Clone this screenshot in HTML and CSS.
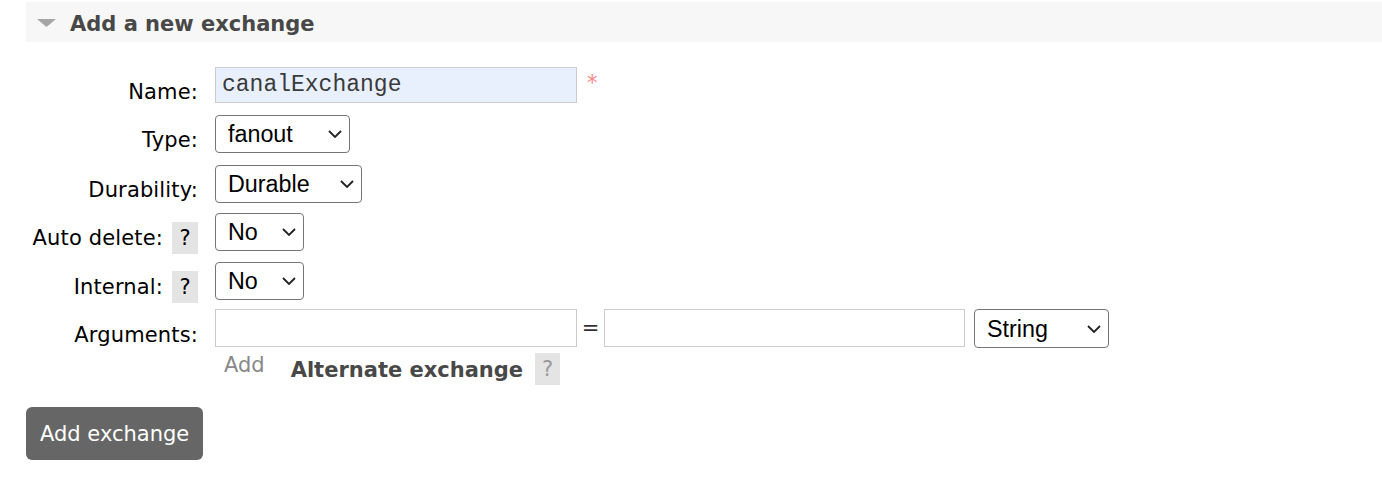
FILE: index.html
```html
<!DOCTYPE html>
<html>
<head>
<meta charset="utf-8">
<link rel="stylesheet" href="styles.css">
</head>
<body>
<div class="section">
  <div class="section-head">
    <svg class="tri" width="19" height="8" viewBox="0 0 19 8"><polygon points="0,0 19,0 9.5,8" fill="#a6a6a6"/></svg>
    <h2 class="title">Add a new exchange</h2>
  </div>
  <form class="form">
    <div class="label">Name:</div>
    <div class="cell">
      <input class="text name-input" type="text" value="canalExchange">
      <span class="req">*</span>
    </div>

    <div class="label">Type:</div>
    <div class="cell">
      <span class="sel-wrap">
        <select class="sel sel-type"><option>direct</option><option selected>fanout</option><option>headers</option><option>topic</option></select>
        <svg class="chev" width="14" height="8" viewBox="0 0 14 8"><polyline points="1,1 7,7 13,1" fill="none" stroke="#222" stroke-width="1.8"/></svg>
      </span>
    </div>

    <div class="label">Durability:</div>
    <div class="cell">
      <span class="sel-wrap">
        <select class="sel sel-dur"><option selected>Durable</option><option>Transient</option></select>
        <svg class="chev" width="14" height="8" viewBox="0 0 14 8"><polyline points="1,1 7,7 13,1" fill="none" stroke="#222" stroke-width="1.8"/></svg>
      </span>
    </div>

    <div class="label">Auto delete:<span class="help">?</span></div>
    <div class="cell">
      <span class="sel-wrap">
        <select class="sel sel-yn"><option selected>No</option><option>Yes</option></select>
        <svg class="chev" width="14" height="8" viewBox="0 0 14 8"><polyline points="1,1 7,7 13,1" fill="none" stroke="#222" stroke-width="1.8"/></svg>
      </span>
    </div>

    <div class="label">Internal:<span class="help">?</span></div>
    <div class="cell">
      <span class="sel-wrap">
        <select class="sel sel-yn"><option selected>No</option><option>Yes</option></select>
        <svg class="chev" width="14" height="8" viewBox="0 0 14 8"><polyline points="1,1 7,7 13,1" fill="none" stroke="#222" stroke-width="1.8"/></svg>
      </span>
    </div>

    <div class="label label-args">Arguments:</div>
    <div class="cell cell-args">
      <div class="arg-row">
        <input class="text arg-input" type="text">
        <span class="eq">=</span>
        <input class="text arg-input arg-value" type="text">
        <span class="sel-wrap sel-wrap-arg">
          <select class="sel sel-type sel-arg"><option selected>String</option><option>Number</option><option>Boolean</option><option>List</option></select>
          <svg class="chev" width="14" height="8" viewBox="0 0 14 8"><polyline points="1,1 7,7 13,1" fill="none" stroke="#222" stroke-width="1.8"/></svg>
        </span>
      </div>
      <div class="arg-links">
        <span class="add-link">Add</span>
        <span class="alt-link">Alternate exchange</span>
        <span class="help help-light">?</span>
      </div>
    </div>
  </form>
  <button class="btn" type="button">Add exchange</button>
</div>
</body>
</html>
```
FILE: styles.css
```css
html, body {
  margin: 0;
  padding: 0;
  background: #ffffff;
}

body {
  font-family: "DejaVu Sans", Verdana, sans-serif;
  font-size: 21px;
  color: #000;
}

.section {
  margin-left: 26px;
  padding-top: 2px;
}

.section-head {
  display: flex;
  align-items: center;
  height: 40px;
  background: #f7f7f7;
}

.tri {
  margin-left: 11px;
  margin-top: 1px;
  display: block;
}

.title {
  margin: 3px 0 0 14px;
  font-size: 21px;
  font-weight: bold;
  color: #484848;
  line-height: 32px;
}

.form {
  display: grid;
  grid-template-columns: 172px auto;
  grid-template-rows: 37px 39px 37px 38px 36px auto;
  column-gap: 17px;
  row-gap: 11px;
  margin-top: 25px;
  align-items: start;
}

.label {
  display: flex;
  justify-content: flex-end;
  align-items: flex-start;
  padding-top: 9px;
  line-height: 32px;
  white-space: nowrap;
  letter-spacing: 0.15px;
}

.label-args {
  padding-top: 10px;
}

.help {
  display: inline-block;
  width: 26px;
  height: 32px;
  line-height: 32px;
  margin-left: 9px;
  text-align: center;
  background: #e4e4e4;
  color: #000;
  letter-spacing: 0;
}

.cell {
  display: flex;
  align-items: flex-start;
}

.text {
  box-sizing: border-box;
  border: 1px solid #cccccc;
  margin: 0;
  padding: 0 6px;
  font-family: "Liberation Mono", "Courier New", monospace;
  font-size: 23px;
  color: #3a3a3a;
  background: #fff;
  outline: none;
}

.name-input {
  width: 362px;
  height: 36px;
  background: #e8f0fe;
}

.req {
  color: #ff8585;
  margin-left: 10px;
  margin-top: 4px;
  line-height: 24px;
  font-size: 21px;
}

.sel-wrap {
  position: relative;
  display: inline-block;
}

.sel {
  display: block;
  box-sizing: border-box;
  height: 38px;
  margin: 0;
  padding: 0 6px 0 12px;
  font-family: "Liberation Sans", Arial, sans-serif;
  font-size: 23.3px;
  color: #000;
  background-color: #fff;
  border: 1px solid #767676;
  border-radius: 4px;
  -webkit-appearance: none;
  appearance: none;
}

.chev {
  position: absolute;
  right: 8px;
  top: 15px;
  pointer-events: none;
}

.sel-type { width: 135px; }
.sel-dur { width: 147px; }
.sel-yn { width: 89px; }

.cell-args {
  flex-direction: column;
}

.arg-row {
  display: flex;
  align-items: flex-start;
}

.arg-input {
  width: 362px;
  height: 38px;
}

.arg-value {
  width: 361px;
}

.eq {
  width: 27px;
  text-align: center;
  line-height: 38px;
  color: #333;
}

.sel-wrap-arg {
  margin-left: 9px;
}

.sel-arg {
  width: 135px;
  height: 39px;
}

.sel-wrap-arg .chev {
  top: 16px;
}

.arg-links {
  display: flex;
  align-items: flex-start;
}

.add-link {
  margin-left: 9px;
  margin-top: 1px;
  line-height: 32px;
  color: #888;
}

.alt-link {
  margin-left: 26px;
  margin-top: 6px;
  line-height: 32px;
  font-weight: bold;
  color: #484848;
}

.help-light {
  margin-left: 12px;
  margin-top: 5px;
  width: 25px;
  color: #999;
}

.btn {
  display: flex;
  align-items: center;
  margin-top: 21px;
  height: 53px;
  padding: 0 14px;
  border: none;
  border-radius: 6px;
  background: #666666;
  color: #fff;
  font-family: "DejaVu Sans", Verdana, sans-serif;
  font-size: 21px;
}
```
